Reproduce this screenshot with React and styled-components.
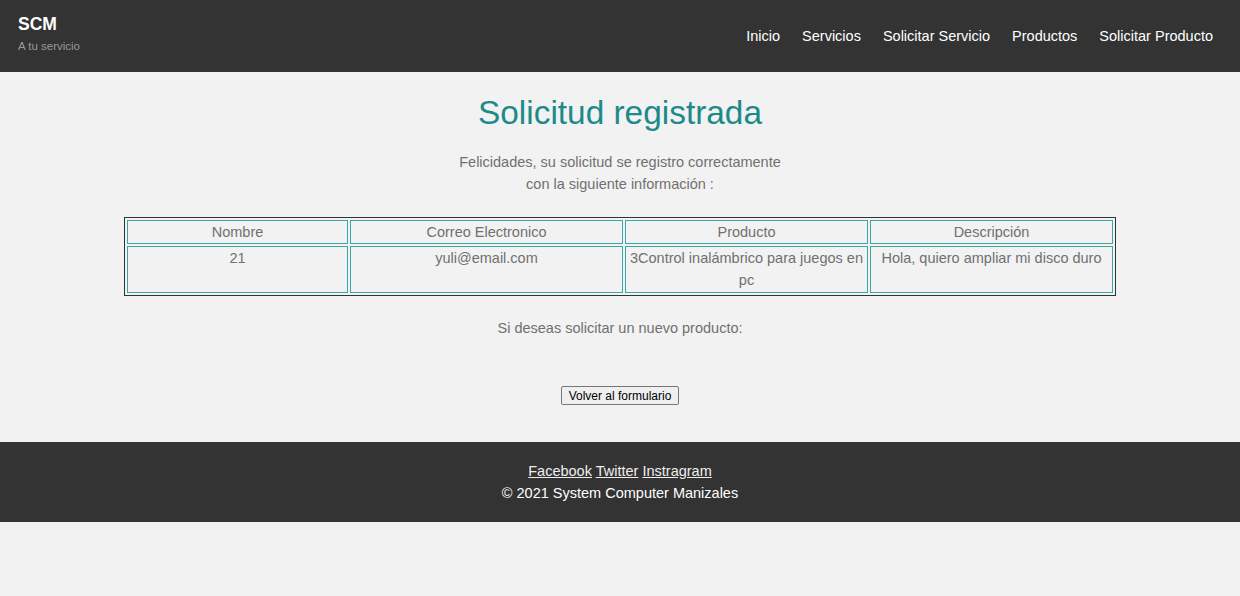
import styled, { createGlobalStyle } from 'styled-components';

const GlobalStyle = createGlobalStyle`
  * {
    box-sizing: border-box;
  }

  body {
    margin: 0;
    background: #f2f2f2;
    font-family: "Liberation Sans", Arial, sans-serif;
    font-size: 14.5px;
    line-height: 1.6;
    color: #707070;
  }
`;

const links = ['Inicio', 'Servicios', 'Solicitar Servicio', 'Productos', 'Solicitar Producto'];

const columns = [
  {title: 'Nombre', width: 221},
  {title: 'Correo Electronico', width: 273},
  {title: 'Producto', width: 243},
  {title: 'Descripción', width: 243},
];

const row = ['21', 'yuli@email.com', '3Control inalámbrico para juegos en pc', 'Hola, quiero ampliar mi disco duro'];

const App = () => {
  return (
    <>
      <GlobalStyle/>
      <Header>
        <Brand>
          <Logo>SCM</Logo>
          <Slogan>A tu servicio</Slogan>
        </Brand>
        <Nav>
          {links.map((item) => (
            <NavLink key={item} href="#">{item}</NavLink>
          ))}
        </Nav>
      </Header>

      <Main>
        <Title>Solicitud registrada</Title>
        <Intro>
          Felicidades, su solicitud se registro correctamente<br/>
          con la siguiente información :
        </Intro>

        <Table>
          <thead>
            <tr>
              {columns.map((col) => (
                <Th key={col.title} $width={col.width}>{col.title}</Th>
              ))}
            </tr>
          </thead>
          <tbody>
            <tr>
              {row.map((value, index) => (
                <Td key={index}>{value}</Td>
              ))}
            </tr>
          </tbody>
        </Table>

        <Note>Si deseas solicitar un nuevo producto:</Note>
        <Button type="button">Volver al formulario</Button>
      </Main>

      <Footer>
        <Social>
          <FooterLink href="#">Facebook</FooterLink>{' '}
          <FooterLink href="#">Twitter</FooterLink>{' '}
          <FooterLink href="#">Instragram</FooterLink>
        </Social>
        <Copy>© 2021 System Computer Manizales</Copy>
      </Footer>
    </>
  )
}

const Header = styled.header`
  height: 72px;
  background: #333;
  display: flex;
  align-items: center;
  justify-content: space-between;
  padding: 0 27px 0 18px;
`;

const Brand = styled.div`
  display: flex;
  flex-direction: column;
  margin-top: -5px;
`;

const Logo = styled.div`
  color: #fff;
  font-weight: bold;
  font-size: 17.5px;
  line-height: 20px;
`;

const Slogan = styled.div`
  color: #999;
  font-size: 11.5px;
  line-height: 16px;
  margin-top: 4px;
`;

const Nav = styled.nav`
  display: flex;
  gap: 22px;
  margin-top: 2px;
`;

const NavLink = styled.a`
  color: #fff;
  text-decoration: none;
  font-size: 14.5px;
`;

const Main = styled.main`
  display: flex;
  flex-direction: column;
  align-items: center;
  padding: 14px 0 37px;
`;

const Title = styled.h1`
  margin: 0;
  color: #1d8a8a;
  font-weight: normal;
  font-size: 33.4px;
  line-height: 53px;
`;

const Intro = styled.p`
  margin: 12px 0 0;
  text-align: center;
  line-height: 22px;
`;

const Table = styled.table`
  margin-top: 22px;
  width: 992px;
  table-layout: fixed;
  border: 1px solid #333;
  border-spacing: 2px;
`;

const Th = styled.th`
  width: ${({$width}) => $width}px;
  border: 1px solid #3aa7a7;
  font-weight: normal;
  color: #707070;
  line-height: 22px;
  padding: 0 4px;
`;

const Td = styled.td`
  border: 1px solid #3aa7a7;
  text-align: center;
  vertical-align: top;
  color: #707070;
  line-height: 22px;
  padding: 0 4px 1px;
  height: 47px;
`;

const Note = styled.p`
  margin: 21px 0 0;
  line-height: 22px;
`;

const Button = styled.button`
  margin-top: 47px;
  font-family: "Liberation Sans", Arial, sans-serif;
  font-size: 12px;
  line-height: 14px;
  color: #000;
  background: #efefef;
  border: 1px solid #767676;
  border-radius: 2px;
  padding: 1px 6px;
  height: 19px;
  width: 118px;
`;

const Footer = styled.footer`
  background: #333;
  padding: 18px 0;
  text-align: center;
  color: #fff;
  line-height: 22px;
`;

const Social = styled.div`
  color: #eee;
`;

const FooterLink = styled.a`
  color: #eee;
  text-decoration: underline;
`;

const Copy = styled.div`
  color: #fff;
`;

export default App;
